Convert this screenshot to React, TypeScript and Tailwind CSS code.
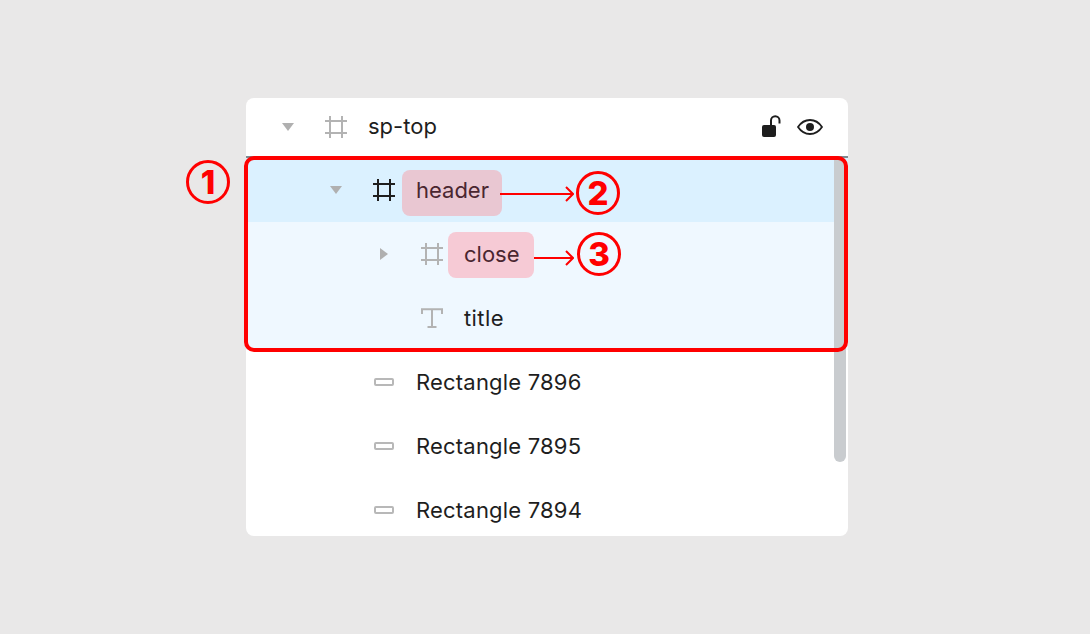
import React from "react";

const Frame = ({ dark }: { dark?: boolean }) => (
  <svg width="22" height="22" viewBox="0 0 22 22" fill="none" stroke={dark ? "#1e1e1e" : "#b3b3b3"} strokeWidth="2">
    <path d="M5 0V22M17 0V22M0 5H22M0 17H22" />
  </svg>
);
const Down = () => (
  <svg width="12" height="8" viewBox="0 0 12 8" fill="#b0b0b0"><path d="M0 0H12L6 8Z" /></svg>
);
const Right = () => (
  <svg width="8" height="12" viewBox="0 0 8 12" fill="#b0b0b0"><path d="M0 0V12L8 6Z" /></svg>
);
const TIcon = () => (
  <svg width="22" height="20" viewBox="0 0 22 20" fill="none" stroke="#b3b3b3" strokeWidth="2">
    <path d="M1 6V1.200H21V6M11 1.200V19M6.500 19H15.500" />
  </svg>
);
const RectIcon = () => (
  <svg width="20" height="8" viewBox="0 0 20 8" fill="none" stroke="#b8b8b8" strokeWidth="2">
    <rect x="1" y="1" width="18" height="6" rx="1" />
  </svg>
);
const Lock = () => (
  <svg width="20" height="22" viewBox="0 0 20 22" fill="none">
    <rect x="0" y="10" width="14" height="12" rx="2" fill="#1e1e1e" />
    <path d="M9 10V5.500a4.250 4.250 0 0 1 8.500 0V8.500" stroke="#1e1e1e" strokeWidth="2" />
  </svg>
);
const Eye = () => (
  <svg width="26" height="16" viewBox="0 0 26 16" fill="none">
    <path d="M1 8C4 3.500 8.200 1 13 1s9 2.500 12 7c-3 4.500-7.200 7-12 7S4 12.500 1 8Z" stroke="#1e1e1e" strokeWidth="1.800" />
    <circle cx="13" cy="8" r="4" fill="#1e1e1e" />
  </svg>
);

const Arrow = ({ width }: { width: number }) => (
  <svg width={width} height="16" viewBox={`0 0 ${width} 16`} fill="none" stroke="#ff0000" strokeWidth="2">
    <path d={`M0 8H${width - 1}M${width - 8} 1L${width - 1} 8L${width - 8} 15`} />
  </svg>
);

const Num = ({ n, className }: { n: string; className: string }) => (
  <div
    className={`absolute w-[44px] h-[44px] rounded-full border-[3px] border-[#ff0000] flex items-center justify-center text-[#ff0000] text-[33px] font-extrabold leading-none font-['Inter',sans-serif] ${className}`}
  >
    {n}
  </div>
);

const Cell = ({ children }: { children?: React.ReactNode }) => (
  <div className="w-[48px] h-full shrink-0 flex items-center justify-center">{children}</div>
);

export default function App() {
  return (
    <div className="w-[1090px] h-[634px] bg-[#e9e8e8] pl-[246px] pt-[98px] overflow-hidden font-['Inter',sans-serif] text-[22px] text-[#1e1e1e]">
      <div className="relative w-[602px] h-[438px]">
        <div className="w-full h-full bg-white rounded-[8px] overflow-hidden">
          <div className="h-[60px] pl-[18px] pr-[25px] pb-[1px] flex items-center border-b-2 border-[#7f8a90]">
            <Cell><Down /></Cell>
            <Cell><Frame /></Cell>
            <span className="ml-[8px]">sp-top</span>
            <div className="ml-auto flex items-center gap-[15px]">
              <div className="mt-[-2px]"><Lock /></div>
              <Eye />
            </div>
          </div>

          <div className="h-[64px] pl-[66px] flex items-center bg-[#dbf1ff]">
            <Cell><Down /></Cell>
            <Cell><Frame dark /></Cell>
            <span className="ml-[-6px] mt-[6px] h-[46px] pl-[14px] pr-[13px] pb-[6px] flex items-center rounded-[8px] bg-[#e9c7d2] text-[#4a2630]">header</span>
          </div>

          <div className="h-[64px] pl-[114px] flex items-center bg-[#eff8ff]">
            <Cell><Right /></Cell>
            <Cell><Frame /></Cell>
            <span className="ml-[-8px] mt-[2px] h-[46px] w-[86px] pl-[16px] pb-[2px] flex items-center rounded-[8px] bg-[#f6cad5] text-[#4a2630]">close</span>
          </div>

          <div className="h-[64px] pl-[114px] flex items-center bg-[#eff8ff]">
            <Cell />
            <Cell><TIcon /></Cell>
            <span className="ml-[8px] tracking-[0.4px]">title</span>
          </div>

          {["Rectangle 7896", "Rectangle 7895", "Rectangle 7894"].map((t) => (
            <div key={t} className="h-[64px] pl-[66px] flex items-center">
              <Cell />
              <Cell><RectIcon /></Cell>
              <span className="ml-[8px] tracking-[0.2px]">{t}</span>
            </div>
          ))}
        </div>

        <div className="absolute left-[588px] top-[62px] w-[12px] h-[302px] rounded-b-[6px] bg-[#c9cccf]" />
        <div className="absolute left-[-2px] top-[58px] w-[604px] h-[196px] border-4 border-[#ff0000] rounded-[10px]" />

        <div className="absolute left-[254px] top-[88px]"><Arrow width={74} /></div>
        <div className="absolute left-[288px] top-[152px]"><Arrow width={40} /></div>

        <Num n="1" className="left-[-60px] top-[62px]" />
        <Num n="2" className="left-[330px] top-[73px]" />
        <Num n="3" className="left-[331px] top-[134px]" />
      </div>
    </div>
  );
}
